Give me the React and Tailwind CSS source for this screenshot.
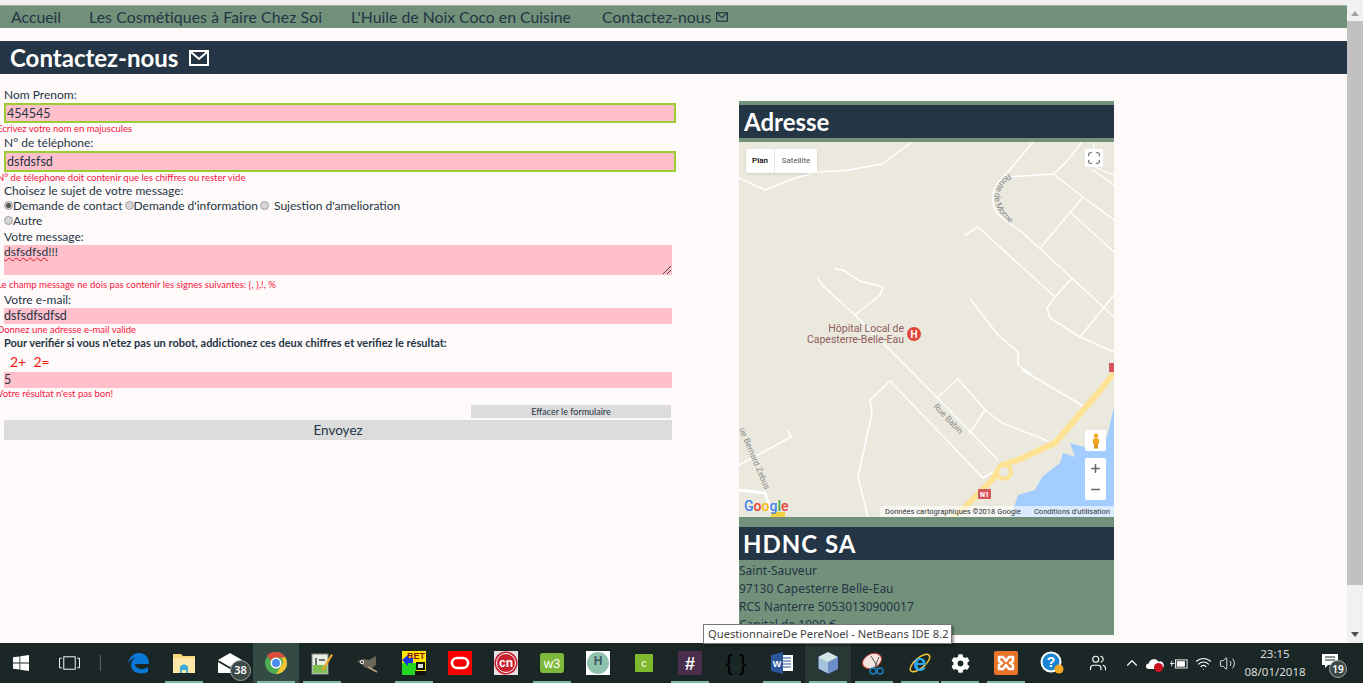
// App.jsx
import React from 'react';
import { ChevronUp, Wifi, Volume2, Users, Maximize, Plus, Minus } from 'lucide-react';
import { FaCog } from 'react-icons/fa';

const comic = 'font-["Comic_Sans_MS","Lato",sans-serif]';

const Envelope = ({ className }) => (
  <svg viewBox="0 0 20 16" className={className} fill="none" stroke="currentColor">
    <rect x="1" y="1" width="18" height="14" strokeWidth="2" />
    <path d="M2 2l8 7 8-7" strokeWidth="2" />
  </svg>
);

const Label = ({ h, children, bold }) => (
  <div className={`pl-[4px] flex items-center whitespace-nowrap ${h} ${bold ? 'font-bold text-[11px]' : 'text-[12px]'}`}>{children}</div>
);

const Error = ({ children, className = '' }) => (
  <div className={`-ml-[3px] h-[12px] flex items-center text-[9.5px] text-[#f5143c] whitespace-nowrap ${className}`}>{children}</div>
);

const Field = ({ value, w, h, green }) => (
  <input
    readOnly
    value={value}
    className={`block ml-[4px] ${w} ${h} bg-[#ffc0cb] text-[12.500px] text-[#243545] outline-none ${green ? 'border-2 border-[#9acd32] px-[1px]' : 'px-0'}`}
  />
);

const Radio = ({ checked }) => (
  <span className="w-[9px] h-[9px] rounded-full bg-[#d4d4d4] border border-[#a0a0a0] flex items-center justify-center shrink-0">
    {checked && <span className="w-[5px] h-[5px] rounded-full bg-[#555]" />}
  </span>
);

const ContactForm = () => (
  <div className="w-[739px] shrink-0 pt-[13px] text-[#243545] font-['Lato',sans-serif]">
    <Label h="h-[16px]">Nom Prenom:</Label>
    <Field value="454545" w="w-[672px]" h="h-[20px]" green />
    <Error>Ecrivez votre nom en majuscules</Error>
    <Label h="h-[16px]">N° de téléphone:</Label>
    <Field value="dsfdsfsd" w="w-[672px]" h="h-[21px]" green />
    <Error>N° de télephone doit contenir que les chiffres ou rester vide</Error>
    <Label h="h-[14px]">Choisez le sujet de votre message:</Label>
    <div className="h-[15px] pl-[4px] flex items-center text-[12px] whitespace-nowrap">
      <Radio checked />
      <span>Demande de contact</span>
      <span className="ml-[2px]"><Radio /></span>
      <span>Demande d'information</span>
      <span className="ml-[2px]"><Radio /></span>
      <span className="ml-[5px]">Sujestion d'amelioration</span>
    </div>
    <div className="h-[15px] pl-[4px] flex items-center text-[12px]">
      <Radio />
      <span>Autre</span>
    </div>
    <Label h="h-[17px]">Votre message:</Label>
    <div className="relative ml-[4px] w-[668px] h-[30px] bg-[#ffc0cb] text-[12px] leading-[14px]">
      <span className="underline decoration-wavy decoration-[#e8132f] decoration-1">dsfsdfsd</span>!!!
      <svg viewBox="0 0 10 10" className="absolute right-0 bottom-0 w-[10px] h-[10px]" stroke="#444" fill="none">
        <path d="M1 9l8-8M5 9l4-4" />
      </svg>
    </div>
    <Error className="mt-[4px]">Le champ message ne dois pas contenir les signes suivantes: {'{'}, {'}'},!, %</Error>
    <Label h="h-[17px]">Votre e-mail:</Label>
    <Field value="dsfsdfsdfsd" w="w-[668px]" h="h-[16px]" />
    <Error>Donnez une adresse e-mail valide</Error>
    <Label h="h-[15px]" bold>Pour verifiér si vous n'etez pas un robot, addictionez ces deux chiffres et verifiez le résultat:</Label>
    <div className="h-[21px] pl-[10px] flex items-center text-[14px] text-[#f01414] whitespace-pre">2+  2=</div>
    <Field value="5" w="w-[668px]" h="h-[16px]" />
    <Error>Votre résultat n'est pas bon!</Error>
    <div className="ml-[471px] mt-[5px] w-[200px] h-[13px] bg-[#dcdcdc] flex items-center justify-center text-[9px]">Effacer le formulaire</div>
    <div className="ml-[4px] mt-[2px] w-[668px] h-[20px] bg-[#dcdcdc] flex items-center justify-center text-[13.500px]">Envoyez</div>
  </div>
);

const MapDrawing = () => (
  <svg viewBox="0 0 375 375" className="block w-[375px] h-[375px]" fill="none" strokeLinejoin="round" strokeLinecap="round">
    <defs>
      <path id="morne" d="M271 30C258 40 252 52 258 66C264 76 272 82 282 92" />
    </defs>
    <rect width="375" height="375" fill="#ebe9de" />
    <path d="M375 265L368 295 349 306 331 301 336 315 324 311 321 321 303 335 296 348 279 353 275 365 270 375H375Z" fill="#a3ccff" />
    <g stroke="#ffffff" strokeWidth="1.500">
      <path d="M0 36L26 48 56 36 79 30 109 28 143 22 173 0" />
      <path d="M294 0L268 31" />
      <path d="M268 35L314 32 344 55 375 78" />
      <path d="M314 32C328 22 335 10 343 0" />
      <path d="M354 28L375 43M354 0L358 26 375 33" strokeWidth="1.200" />
      <path d="M268 31C255 42 250 55 256 68C263 78 272 82 283 90L375 175" />
      <path d="M344 55L302 105M331 70L375 110" />
      <path d="M226 93L239 85 316 155" />
      <path d="M333 136L316 155 308 166 311 176 341 195 375 210" />
      <path d="M375 153L341 195" />
      <path d="M232 158L259 193 279 210 279 223 293 233" />
      <path d="M283 228L346 265" />
      <path d="M79 136L83 143 116 173 176 233 259 318" />
      <path d="M96 127L104 128 121 139 144 145 141 153 116 173" />
      <path d="M131 258L151 239 244 336 254 330" />
      <path d="M131 258L133 271 119 335 129 375" />
      <path d="M199 255L219 237 236 256 246 268 231 291" />
      <path d="M246 268L263 281 309 299" />
      <path d="M49 289L52 295 0 323" />
      <path d="M0 348L26 351 34 375" strokeWidth="3" />
    </g>
    <path d="M375 231L359 251 316 301 279 318 263 323 253 338 223 368 215 375" stroke="#fde293" strokeWidth="6" />
    <circle cx="265" cy="330" r="7" fill="#ebe9de" stroke="#fde293" strokeWidth="4" />
    <rect x="239" y="347" width="13" height="10" rx="1" fill="#d4545b" />
    <text x="245.500" y="355" textAnchor="middle" fontFamily="Roboto, sans-serif" fontSize="7" fontWeight="700" fill="#fff">N1</text>
    <rect x="370" y="221" width="5" height="9" fill="#d4545b" />
    <rect x="32" y="370" width="14" height="5" fill="#f5d142" />
    <g fontFamily="Roboto, sans-serif" fontSize="8.500" fill="#8a8a8a">
      <text><textPath href="#morne" startOffset="2">Route de Morne</textPath></text>
      <text transform="translate(194 265) rotate(46)">Rue Babin</text>
      <text transform="translate(0 287) rotate(67)">ue Bernard Zebus</text>
    </g>
    <g fontFamily="Roboto, sans-serif" fontSize="10.500" fill="#8e5b5b" textAnchor="end">
      <text x="165" y="190">Hôpital Local de</text>
      <text x="165" y="201">Capesterre-Belle-Eau</text>
    </g>
    <circle cx="175" cy="192" r="7" fill="#e0453a" />
    <text x="175" y="196" textAnchor="middle" fontFamily="Roboto, sans-serif" fontSize="10" fontWeight="700" fill="#fff">H</text>
  </svg>
);

const MapPanel = () => (
  <div className="relative w-[375px] h-[375px] overflow-hidden">
    <MapDrawing />
    <div className="absolute left-[7px] top-[7px] h-[24px] flex bg-white rounded-[2px] shadow text-[8px] font-['Roboto',sans-serif]">
      <span className="w-[29px] flex items-center justify-center text-black font-medium border-r border-[#e6e6e6]">Plan</span>
      <span className="w-[42px] flex items-center justify-center text-[#565656]">Satellite</span>
    </div>
    <div className="absolute left-[346px] top-[7px] w-[18px] h-[18px] bg-white flex items-center justify-center">
      <Maximize size={14} strokeWidth={2} color="#666" />
    </div>
    <div className="absolute left-[346px] top-[288px] w-[21px] h-[21px] bg-white rounded-[2px] flex items-center justify-center">
      <svg viewBox="0 0 10 18" className="w-[10px] h-[16px]">
        <circle cx="5" cy="3" r="2.500" fill="#f5a623" />
        <rect x="1.500" y="6" width="7" height="7" rx="2" fill="#f5a623" />
        <rect x="3" y="12" width="4" height="5.500" fill="#e09016" />
      </svg>
    </div>
    <div className="absolute left-[346px] top-[316px] w-[21px] h-[42px] bg-white rounded-[2px] flex flex-col items-center justify-around">
      <Plus size={13} strokeWidth={3} color="#666" />
      <Minus size={13} strokeWidth={3} color="#666" />
    </div>
    <div className="absolute left-[5px] top-[356px] text-[14px] font-medium font-['Roboto',sans-serif] leading-[16px]">
      <span className="text-[#4285f4]">G</span>
      <span className="text-[#ea4335]">o</span>
      <span className="text-[#fbbc05]">o</span>
      <span className="text-[#4285f4]">g</span>
      <span className="text-[#34a853]">l</span>
      <span className="text-[#ea4335]">e</span>
    </div>
    <div className="absolute right-0 bottom-0 w-[234px] h-[11px] bg-white/60 flex items-center justify-between pl-[5px] pr-[4px] text-[7.500px] text-[#333] font-['Roboto',sans-serif] whitespace-nowrap">
      <span>Données cartographiques ©2018 Google</span>
      <span>Conditions d'utilisation</span>
    </div>
  </div>
);

const Sidebar = () => (
  <div className="w-[375px] shrink-0 mt-[27px] h-[534px] overflow-hidden bg-[#72917a]">
    <div className={`mt-[4px] h-[33px] bg-[#243545] text-white text-[24px] font-bold pl-[5px] flex items-center ${comic}`}>Adresse</div>
    <div className="mt-[4px]"><MapPanel /></div>
    <div className={`mt-[10px] h-[33px] bg-[#243545] text-white text-[24px] font-bold pl-[4px] flex items-center tracking-[1px] ${comic}`}>HDNC SA</div>
    <div className="text-[12px] leading-[18px] pt-[2px] text-[#243545]">
      <div>Saint-Sauveur</div>
      <div>97130 Capesterre Belle-Eau</div>
      <div>RCS Nanterre 50530130900017</div>
      <div>Capital de 1000 €</div>
    </div>
  </div>
);

const Scrollbar = () => (
  <div className="w-[16px] shrink-0 bg-[#f1f1f1] flex flex-col">
    <div className="h-[21px] flex items-end justify-center pb-[5px]">
      <span className="w-0 h-0 border-x-[4px] border-x-transparent border-b-[5px] border-b-[#a3a3a3]" />
    </div>
    <div className="h-[564px] bg-[#c1c1c1]" />
    <div className="flex-1 flex items-end justify-center pb-[6px]">
      <span className="w-0 h-0 border-x-[4px] border-x-transparent border-t-[5px] border-t-[#505050]" />
    </div>
  </div>
);

// taskbar app icons, each one 24x24
const icons = {
  edge: (
    <svg viewBox="0 0 24 24" className="w-[24px] h-[24px]">
      <path d="M2 13C3 5 9 2 13 2c6 0 10 4 10 11H9c0 5 8 7 13 3v5c-7 3-17 1-17-7 0-3 2-6 5-7-4 0-7 3-8 6z" fill="#0a78d6" />
    </svg>
  ),
  explorer: (
    <svg viewBox="0 0 24 24" className="w-[24px] h-[24px]">
      <path d="M1 3h8l2 2h12v17H1z" fill="#f6d77c" />
      <path d="M1 7h22v15H1z" fill="#fde8a6" />
      <path d="M8 22v-6l-1 0 5-3 5 3h-1v6h-2v-3h-4v3z" fill="#3fa9de" />
    </svg>
  ),
  mail: (
    <svg viewBox="0 0 24 20" className="w-[24px] h-[20px]">
      <path d="M0 7L12 0l12 7-12 7z" fill="#fff" />
      <path d="M0 9l12 7 12-7v11H0z" fill="#fff" />
    </svg>
  ),
  chrome: (
    <svg viewBox="0 0 24 24" className="w-[24px] h-[24px]">
      <circle cx="12" cy="12" r="11" fill="#4cae50" />
      <path d="M12 1a11 11 0 0 1 9.500 5.500H12a5.500 5.500 0 0 0-5 3L3 4.500A11 11 0 0 1 12 1z" fill="#dd4b3e" />
      <path d="M21.500 6.500A11 11 0 0 1 12 23l5-8a5.500 5.500 0 0 0 0-8.500z" fill="#f6c231" />
      <circle cx="12" cy="12" r="5.500" fill="#fff" />
      <circle cx="12" cy="12" r="4" fill="#4a8bf0" />
    </svg>
  ),
  notepad: (
    <svg viewBox="0 0 24 24" className="w-[24px] h-[24px]">
      <rect x="2" y="3" width="16" height="20" fill="#e8efe2" stroke="#888" />
      <rect x="3" y="14" width="14" height="8" fill="#7cc04f" />
      <path d="M6 7v7M9 9h6" stroke="#444" strokeWidth="1.500" />
      <path d="M12 18L21 3l2 1-9 15-2 1z" fill="#e8a828" />
    </svg>
  ),
  gimp: (
    <svg viewBox="0 0 24 24" className="w-[24px] h-[24px]">
      <path d="M1 10l7-2 5 1 7-4 0 9-4 3-6 0-5-4z" fill="#6b6459" />
      <path d="M12 16l9 5" stroke="#b5a37f" strokeWidth="2" />
      <circle cx="6" cy="11" r="2" fill="#fff" />
      <circle cx="6" cy="11" r="1" fill="#111" />
    </svg>
  ),
  ret: (
    <svg viewBox="0 0 24 24" className="w-[24px] h-[24px]">
      <rect width="24" height="24" fill="#ffe600" />
      <rect y="12" width="14" height="12" fill="#22d622" />
      <text x="14" y="8" textAnchor="middle" fontFamily="Liberation Sans, sans-serif" fontSize="9" fontWeight="700" fill="#8b1010">RET</text>
      <path d="M0 9l6-5v3h5v5H6v3z" fill="#1a35e0" />
      <rect x="14" y="11" width="9" height="8" fill="#111" />
      <rect x="16" y="13" width="5" height="4" fill="#ddd" />
      <rect x="13" y="20" width="11" height="4" fill="#111" />
    </svg>
  ),
  oracle: (
    <svg viewBox="0 0 24 24" className="w-[24px] h-[24px]">
      <rect width="24" height="24" fill="#f80000" />
      <rect x="4" y="7" width="16" height="10" rx="5" fill="none" stroke="#fff" strokeWidth="2.500" />
    </svg>
  ),
  cn: (
    <svg viewBox="0 0 24 24" className="w-[24px] h-[24px]">
      <rect width="24" height="24" fill="#e8dfe0" />
      <circle cx="12" cy="12" r="11.500" fill="#c8202f" />
      <circle cx="12" cy="12" r="9.500" fill="none" stroke="#fff" strokeWidth="1" />
      <text x="12" y="16" textAnchor="middle" fontFamily="Liberation Sans, sans-serif" fontSize="12" fontWeight="700" fill="#fff">cn</text>
    </svg>
  ),
  w3: (
    <svg viewBox="0 0 24 24" className="w-[24px] h-[24px]">
      <rect width="24" height="20" y="2" rx="3" fill="#7fb93c" />
      <text x="12" y="17" textAnchor="middle" fontFamily="Liberation Sans, sans-serif" fontSize="13" fill="#fff">w3</text>
    </svg>
  ),
  hdnc: (
    <svg viewBox="0 0 24 24" className="w-[24px] h-[24px]">
      <rect width="24" height="24" fill="#fff" />
      <circle cx="12" cy="12" r="11" fill="#8fc2ad" />
      <text x="12" y="14" textAnchor="middle" fontFamily="Liberation Sans, sans-serif" fontSize="12" fontWeight="700" fill="#3c5560">H</text>
    </svg>
  ),
  camtasia: (
    <svg viewBox="0 0 18 18" className="w-[18px] h-[18px]">
      <rect width="18" height="18" rx="1" fill="#7fb92d" />
      <text x="9" y="13" textAnchor="middle" fontFamily="Liberation Sans, sans-serif" fontSize="11" fill="#fff">c</text>
    </svg>
  ),
  slack: (
    <svg viewBox="0 0 24 24" className="w-[24px] h-[24px]">
      <rect width="24" height="24" fill="#4a2f4c" />
      <text x="12" y="19" textAnchor="middle" fontFamily="Liberation Sans, sans-serif" fontSize="18" fontWeight="700" fill="#fff">#</text>
    </svg>
  ),
  braces: <span className="text-[22px] text-black leading-none font-['Liberation_Sans',sans-serif]">{'{ }'}</span>,
  word: (
    <svg viewBox="0 0 24 24" className="w-[24px] h-[24px]">
      <rect x="9" y="4" width="14" height="16" fill="#fff" />
      <path d="M12 7h9M12 10h9M12 13h9M12 16h9" stroke="#2b579a" />
      <path d="M1 4l12-3v22L1 20z" fill="#2b579a" />
      <text x="7" y="16" textAnchor="middle" fontFamily="Liberation Sans, sans-serif" fontSize="9" fontWeight="700" fill="#fff">W</text>
    </svg>
  ),
  cube: (
    <svg viewBox="0 0 24 24" className="w-[24px] h-[24px]">
      <path d="M12 1l10 5v12l-10 5-10-5V6z" fill="#a8c4dc" stroke="#1c2a55" />
      <path d="M2 6l10 5 10-5-10-5z" fill="#d5e6e6" />
      <path d="M12 11v12l10-5V6z" fill="#6f8fc8" />
    </svg>
  ),
  scissors: (
    <svg viewBox="0 0 24 24" className="w-[24px] h-[24px]">
      <ellipse cx="10" cy="10" rx="10" ry="7" fill="#f3e4e0" stroke="#c0392b" transform="rotate(-25 10 10)" />
      <path d="M9 5l8 13M17 6l-5 12" stroke="#555" />
      <circle cx="18" cy="20" r="3" fill="none" stroke="#1a7fc1" strokeWidth="1.500" />
      <circle cx="11" cy="20" r="3" fill="none" stroke="#1a7fc1" strokeWidth="1.500" />
    </svg>
  ),
  ie: (
    <svg viewBox="0 0 24 24" className="w-[24px] h-[24px]">
      <ellipse cx="12" cy="12" rx="12" ry="5" fill="none" stroke="#f2c230" strokeWidth="1.500" transform="rotate(-40 12 12)" />
      <text x="12" y="20" textAnchor="middle" fontFamily="Liberation Sans, sans-serif" fontSize="24" fontWeight="700" fill="#2aa7e8">e</text>
    </svg>
  ),
  gear: <FaCog size={19} color="#fff" />,
  xampp: (
    <svg viewBox="0 0 24 24" className="w-[24px] h-[24px]">
      <rect width="24" height="24" rx="2" fill="#e8742a" />
      <path d="M5 6h4l3 4 3-4h4v4l-3 2 3 2v4h-4l-3-4-3 4H5v-4l3-2-3-2z" fill="none" stroke="#fff" strokeWidth="2.500" strokeLinejoin="round" />
    </svg>
  ),
  help: (
    <svg viewBox="0 0 24 24" className="w-[24px] h-[24px]">
      <circle cx="11" cy="11" r="10.500" fill="#fff" />
      <circle cx="11" cy="11" r="8.500" fill="#1b84d4" />
      <text x="11" y="16" textAnchor="middle" fontFamily="Liberation Sans, sans-serif" fontSize="14" fontWeight="700" fill="#fff">?</text>
      <circle cx="19" cy="18" r="4.500" fill="#f5a623" />
    </svg>
  ),
};

const apps = [
  { key: 'edge' },
  { key: 'explorer', on: true },
  { key: 'mail', badge: '38' },
  { key: 'chrome', on: true, active: true },
  { key: 'notepad', on: true },
  { key: 'gimp' },
  { key: 'ret', on: true },
  { key: 'oracle' },
  { key: 'cn' },
  { key: 'w3', on: true },
  { key: 'hdnc' },
  { key: 'camtasia' },
  { key: 'slack', on: true },
  { key: 'braces' },
  { key: 'word', on: true },
  { key: 'cube', on: true, hover: true },
  { key: 'scissors', on: true },
  { key: 'ie', on: true },
];

const AppIcon = ({ app, className = 'w-[46px]' }) => (
  <div className={`relative h-full flex items-center justify-center shrink-0 ${className} ${app.active ? 'bg-[#344a44]' : app.hover ? 'bg-[#2a3835]' : ''}`}>
    {icons[app.key]}
    {app.on && <span className="absolute bottom-0 left-[4px] right-[4px] h-[2px] bg-[#7fb7a8]" />}
    {app.badge && (
      <span className="absolute left-[23px] top-[17px] w-[21px] h-[21px] rounded-full bg-[#3c4a48] border border-[#9aa5a2] text-white text-[11px] font-semibold flex items-center justify-center">{app.badge}</span>
    )}
  </div>
);

const Taskbar = () => (
  <div className="h-[40px] shrink-0 bg-[#1b2726] flex items-stretch font-['Noto_Sans',sans-serif]">
    <div className="w-[42px] flex items-center justify-center">
      <svg viewBox="0 0 16 16" className="w-[16px] h-[16px]" fill="#fff">
        <path d="M0 2.300l6.500-.9v6.200H0zM7.300 1.300L16 0v7.600H7.300zM0 8.400h6.500v6.200L0 13.700zM7.300 8.400H16V16l-8.700-1.200z" />
      </svg>
    </div>
    <div className="w-[54px] flex items-center justify-center">
      <svg viewBox="0 0 22 14" className="w-[21px] h-[14px]" fill="none" stroke="#fff" strokeWidth="1">
        <rect x="5" y="0.500" width="12" height="13" />
        <path d="M3 2H0.500v10H3M19 2h2.500v10H19" />
      </svg>
    </div>
    <div className="w-[19px] flex items-center justify-start pl-[4px]">
      <span className="w-[1px] h-[16px] bg-[#566360]" />
    </div>
    {apps.map((app) => (
      <AppIcon key={app.key} app={app} />
    ))}
    <AppIcon app={{ key: 'gear', on: true }} className="w-[46px] -ml-[6px]" />
    <AppIcon app={{ key: 'xampp', on: true }} />
    <AppIcon app={{ key: 'help' }} />
    <div className="w-[45px] flex items-center justify-center">
      <Users size={18} color="#fff" strokeWidth={1.500} />
    </div>
    <div className="flex items-center text-white">
      <div className="w-[23px] flex justify-center"><ChevronUp size={18} strokeWidth={1.500} /></div>
      <div className="relative w-[24px] flex justify-center">
        <svg viewBox="0 0 20 12" className="w-[18px] h-[11px]"><path d="M3 12a3 3 0 0 1 0-6 6 6 0 0 1 11-2 4 4 0 0 1 3 8z" fill="#fff" /></svg>
        <span className="absolute left-[11px] top-[5px] w-[9px] h-[9px] rounded-full bg-[#c8101e]" />
      </div>
      <div className="w-[24px] flex justify-center">
        <svg viewBox="0 0 20 12" className="w-[18px] h-[11px]" fill="none" stroke="#fff"><rect x="6" y="2" width="13" height="9" /><rect x="8" y="4" width="8" height="5" fill="#fff" /><path d="M0 6h5M2 3v6" /></svg>
      </div>
      <div className="w-[25px] flex justify-center"><Wifi size={17} strokeWidth={1.500} /></div>
      <div className="w-[23px] flex justify-center"><Volume2 size={17} strokeWidth={1.200} /></div>
    </div>
    <div className="w-[68px] ml-[2px] flex flex-col items-center justify-center text-[11.500px] leading-[18px] text-[#d8dcdb]">
      <span>23:15</span>
      <span>08/01/2018</span>
    </div>
    <div className="relative flex-1 flex items-center pl-[13px]">
      <svg viewBox="0 0 16 14" className="w-[16px] h-[14px] mb-[4px]">
        <path d="M0 0h16v11H6l-3 3v-3H0z" fill="#fff" />
        <path d="M3 3h10M3 6h10" stroke="#1b2726" />
      </svg>
      <span className="absolute left-[20px] top-[17px] w-[18px] h-[18px] rounded-full bg-[#3c4a48] border border-[#9aa5a2] text-white text-[10px] font-semibold flex items-center justify-center">19</span>
    </div>
  </div>
);

const App = () => (
  <div className="relative w-[1363px] h-[683px] flex flex-col overflow-hidden bg-[#fffafa] font-['Noto_Sans',sans-serif]">
    <div className="flex-1 min-h-0 flex">
      <div className="flex-1 min-w-0 flex flex-col">
        <div className="h-[6px] bg-[#f1f1f1] border-b border-[#a8a8a8]" />
        <nav className={`h-[22px] bg-[#72917a] flex items-center pl-[11px] text-[15.800px] text-[#243545] whitespace-nowrap ${comic}`}>
          <span className="w-[78px]">Accueil</span>
          <span className="w-[262px] tracking-[0.1px]">Les Cosmétiques à Faire Chez Soi</span>
          <span className="w-[251px]">L'Huile de Noix Coco en Cuisine</span>
          <span className="flex items-center gap-[5px]">Contactez-nous <Envelope className="w-[12px] h-[10px]" /></span>
        </nav>
        <h1 className={`mt-[13px] h-[33px] bg-[#243545] text-white text-[24px] font-bold pl-[10px] flex items-center gap-[11px] ${comic}`}>
          Contactez-nous <Envelope className="w-[20px] h-[16px]" />
        </h1>
        <div className="flex items-start flex-1 min-h-0">
          <ContactForm />
          <Sidebar />
        </div>
      </div>
      <Scrollbar />
    </div>
    <Taskbar />
    <div className="absolute left-[703px] top-[624px] w-[249px] h-[20px] bg-white border border-[#767676] shadow-[2px_2px_2px_rgba(0,0,0,0.35)] text-[11.200px] text-[#444] flex items-center pl-[4px] whitespace-nowrap">
      QuestionnaireDe PereNoel - NetBeans IDE 8.2
    </div>
  </div>
);

export default App;
